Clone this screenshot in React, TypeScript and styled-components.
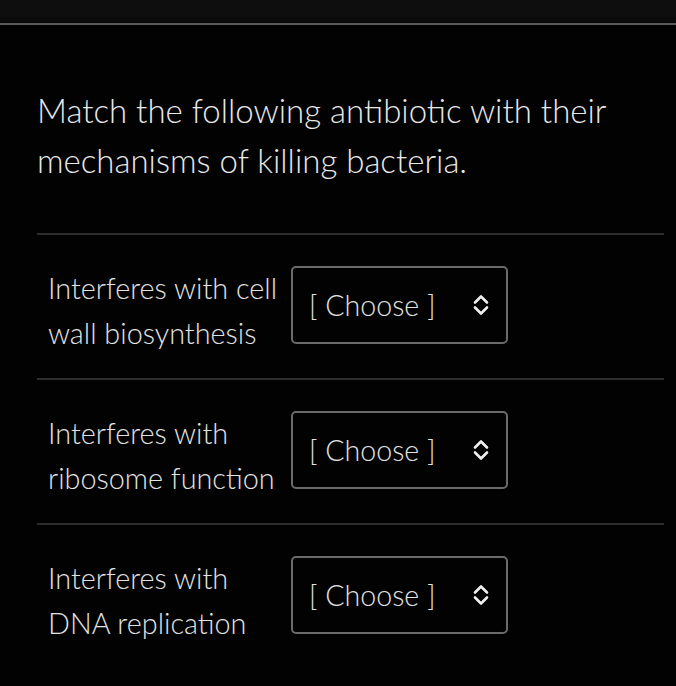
import React from "react";
import styled, { createGlobalStyle } from "styled-components";

const GlobalStyle = createGlobalStyle`
  html, body {
    margin: 0;
    padding: 0;
    background: #020202;
  }
  body {
    font-family: Lato, "Open Sans", sans-serif;
    font-weight: 300;
    color: #e4e4e4;
  }
`;

const Page = styled.div`
  width: 676px;
  min-height: 686px;
  background: #020202;
  overflow: hidden;
`;

const TopBar = styled.div`
  height: 17px;
  background: #0e0e0e;
  border-bottom: 1px solid #070707;
  padding-bottom: 5px;
  box-shadow: inset 0 -5px 0 #0b0b0b;
`;

const TopRule = styled.div`
  height: 2px;
  background: #5a5a5a;
`;

const Content = styled.div`
  padding: 60px 12px 0 37px;
`;

const Question = styled.p`
  margin: 0 0 48px;
  font-size: 33px;
  line-height: 50px;
  font-weight: 300;
  color: #e8e8e8;
`;

const Row = styled.div`
  display: flex;
  align-items: flex-start;
  gap: 11px;
  border-top: 2px solid #2c2c2c;
  padding: 31px 0 22px 11px;
`;

const Label = styled.div`
  width: 232px;
  font-size: 28.8px;
  line-height: 45px;
  color: #e2e2e2;
`;

const Select = styled.div`
  box-sizing: border-box;
  width: 217px;
  height: 78px;
  border: 2px solid #6a6a6a;
  border-radius: 5px;
  display: flex;
  align-items: center;
  justify-content: space-between;
  padding: 0 17px 0 16px;
  font-size: 28.6px;
  color: #e2e2e2;
`;

const Chevrons = () => (
  <svg width="16" height="22" viewBox="0 0 16 22" fill="none">
    <path
      d="M2 8.5 L8 2.5 L14 8.5 M2 13.5 L8 19.5 L14 13.5"
      stroke="#f0f0f0"
      strokeWidth="2.6"
      strokeLinecap="round"
      strokeLinejoin="round"
    />
  </svg>
);

const items = [
  "Interferes with cell wall biosynthesis",
  "Interferes with ribosome function",
  "Interferes with DNA replication",
];

export default function App() {
  return (
    <Page>
      <GlobalStyle />
      <TopBar />
      <TopRule />
      <Content>
        <Question>
          Match the following antibiotic with their mechanisms of killing
          bacteria.
        </Question>
        {items.map((text) => (
          <Row key={text}>
            <Label>{text}</Label>
            <Select>
              <span>[ Choose ]</span>
              <Chevrons />
            </Select>
          </Row>
        ))}
      </Content>
    </Page>
  );
}
